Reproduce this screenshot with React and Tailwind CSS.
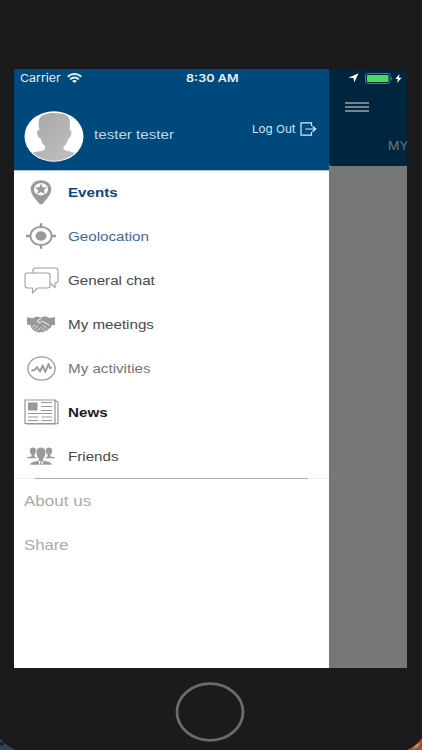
import React from "react";

const LABEL = "origin-left scale-x-[1.14] whitespace-nowrap text-[13.3px] leading-[20px]";

function Wifi() {
  return (
    <svg className="h-[10px] w-[15px]" viewBox="0 0 15 10" fill="none" stroke="#e6f0fa" strokeWidth="2">
      <path d="M0.7 3.8C4.5 0.2 10.5 0.2 14.3 3.8" />
      <path d="M3.1 6.4C5.6 4 9.4 4 11.9 6.4" />
      <path d="M5 7.9C6.4 6.6 8.6 6.6 10 7.9L7.5 10Z" fill="#e6f0fa" stroke="none" />
    </svg>
  );
}

function Avatar() {
  return (
    <svg className="h-[51px] w-[60px]" viewBox="0 0 60 51">
      <defs>
        <clipPath id="face"><ellipse cx="30" cy="25.5" rx="28.6" ry="24.3" /></clipPath>
        <linearGradient id="shade" x1="0" y1="0" x2="1" y2="1">
          <stop offset="0" stopColor="#a6a6a6" />
          <stop offset="1" stopColor="#c2c2c2" />
        </linearGradient>
      </defs>
      <ellipse cx="30" cy="25.5" rx="29.5" ry="25.3" fill="#fff" />
      <path clipPath="url(#face)" fill="url(#shade)" d="M15.500 19C13.500 10 15 4.500 21 3.500C26 1.500 32 2 37 2.500C43 3 46.500 7 46 13L45.500 19C48.500 18 48 26 44.500 27.500C43.500 31 42 34 39.500 36L39.500 38C43 41 49 40 53 43L53 52H7L8 42C14 39.500 19 41 21 38L21 35C18.500 33 17.500 31 16.500 27.500C12.500 26 12 18 15.500 19Z" />
    </svg>
  );
}

function LogoutIcon() {
  return (
    <svg className="h-[14px] w-[17px]" viewBox="0 0 17 14" fill="none" stroke="#dbeaf7" strokeWidth="1.2">
      <path d="M11.500 4V0.800H1V13.200H11.500V10M5.500 7H15.500M12.500 4.200L15.700 7L12.500 9.800" />
    </svg>
  );
}

function EventsIcon() {
  return (
    <svg className="h-[25px] w-[22px]" viewBox="0 0 22 25">
      <path fill="#999" d="M11 0.300C5 0.300 0.700 4.200 0.700 9.200C0.700 14.700 5.500 18.500 9 23.500Q11 25.500 13 23.500C16.500 18.500 21.300 14.700 21.300 9.200C21.300 4.200 17 0.300 11 0.300Z" />
      <ellipse cx="11" cy="9.200" rx="7" ry="6.200" fill="#fff" />
      <path fill="#999" d="M11 3.500L12.700 7.200L17.200 7.500L13.800 10.100L14.900 14L11 11.900L7.100 14L8.200 10.100L4.800 7.500L9.300 7.200Z" />
    </svg>
  );
}

function GeoIcon() {
  return (
    <svg className="h-[26px] w-[30px]" viewBox="0 0 30 26">
      <ellipse cx="15" cy="13" rx="10.600" ry="9.200" fill="none" stroke="#999" strokeWidth="1.800" />
      <ellipse cx="15" cy="13" rx="5.500" ry="4.700" fill="#999" />
      <path stroke="#999" strokeWidth="2.400" d="M15 0.300V5M15 21V25.700M0 13H5M25 13H30" />
    </svg>
  );
}

function ChatIcon() {
  return (
    <svg className="h-[27px] w-[35px]" viewBox="0 0 35 27" fill="#fff" stroke="#a0a0a0" strokeWidth="1.100" strokeLinejoin="round">
      <path d="M11.500 1H31Q34 1 34 3.500V13.500Q34 16 31.500 16H31V20.500L26 16H11.500Q9 16 9 13.500V3.500Q9 1 11.500 1Z" />
      <path d="M3.500 6H23.500Q26 6 26 8.500V18.500Q26 21 23.500 21H13.500L8.500 26V21H3.500Q1 21 1 18.500V8.500Q1 6 3.500 6Z" />
    </svg>
  );
}

function HandshakeIcon() {
  return (
    <svg className="h-[17px] w-[28px]" viewBox="0 0 28 17" strokeLinejoin="round" strokeLinecap="round">
      <path fill="#999" d="M0 1.200L5.500 2.200L9.500 0.500L14 1.500L18.500 0.300L22.500 2L28 1V9L24.500 9.300L24 11.500L21.800 12.800L20.500 14.500L18 14.700L16.300 16.300L13.800 16L11.800 16.800L9 15.500L6 14L4 11.300L3.500 9L0 8.500Z" />
      <path fill="none" stroke="#fff" strokeWidth="0.900" d="M14 2.400L10 5.300Q10.800 7.500 13.500 6.300L15.500 5.300L22 9" />
      <path fill="none" stroke="#fff" strokeWidth="0.700" d="M8.500 8.800L5.500 11M11 10.200L7.500 13M13 12L10.500 14.800M16.500 9.500L19.500 12.300M14.500 11.500L17 14" />
    </svg>
  );
}

function ActivityIcon() {
  return (
    <svg className="h-[25px] w-[29px]" viewBox="0 0 29 25" fill="none" stroke="#999">
      <ellipse cx="14.500" cy="12.500" rx="13.600" ry="11.600" strokeWidth="1.300" />
      <path strokeWidth="1.900" strokeLinejoin="round" d="M4.500 14.500L7.500 14L10 11L13 15.500L15.700 9.500L18.300 16L21.500 8L23 12L24.800 11.500" />
    </svg>
  );
}

function NewsIcon() {
  return (
    <svg className="h-[26px] w-[35px]" viewBox="0 0 35 26" fill="none" stroke="#979797">
      <path d="M31 1.500L34 3.200V24.500L31 25H2" strokeWidth="1.200" />
      <path d="M1 1H31V24.500H1Z" fill="#fff" strokeWidth="1.200" />
      <path d="M4 3.500H13.500V11.500H4Z" fill="#999" stroke="none" />
      <path strokeWidth="1.100" d="M17 3.500H28M17 7.500H28M17 11.500H28M4 14.500H28M4 18H14M17.500 18H28M4 21.500H14M17.500 21.500H28" />
    </svg>
  );
}

function FriendsIcon() {
  return (
    <svg className="h-[18px] w-[28px]" viewBox="0 0 28 18" fill="#999">
      <path d="M2.800 3.500C2.800 -0.500 9.200 -0.500 9.200 3.500C9.200 6 8 7 7.300 8V9.200L10 11.300H0C0 9.500 3.300 10 4.700 9.200V8C3.500 6.500 2.800 5.500 2.800 3.500Z" />
      <path d="M25.200 3.500C25.200 -0.500 18.800 -0.500 18.800 3.500C18.800 6 20 7 20.700 8V9.200L18 11.300H28C28 9.500 24.700 10 23.300 9.200V8C24.500 6.500 25.200 5.500 25.200 3.500Z" />
      <path stroke="#fff" strokeWidth="0.600" d="M9.200 4.800C9.200 -1.200 18.800 -1.200 18.800 4.800C18.800 8.500 17.500 10.500 16.300 12V13.300C19 14.500 25 14 25 18H3C3 14 9 14.500 11.700 13.300V12C10.500 10.500 9.200 8.500 9.200 4.800Z" />
      <path fill="#fff" d="M11.300 13.500L12.600 18H15.400L16.700 13.500L14.500 14.500L15 18H13L13.500 14.500Z" />
    </svg>
  );
}

const items = [
  { text: "Events", Icon: EventsIcon, style: "font-bold text-[#0c4780]" },
  { text: "Geolocation", Icon: GeoIcon, style: "text-[#3e6c98]" },
  { text: "General chat", Icon: ChatIcon, style: "text-[#484848]" },
  { text: "My meetings", Icon: HandshakeIcon, style: "text-[#484848]" },
  { text: "My activities", Icon: ActivityIcon, style: "text-[#747474]" },
  { text: "News", Icon: NewsIcon, style: "font-bold text-[#1b1b1b]" },
  { text: "Friends", Icon: FriendsIcon, style: "text-[#484848]" },
];

function Drawer() {
  return (
    <div className="flex w-[315px] shrink-0 flex-col bg-white">
      <header className="h-[102px] border-b border-[#a9c6de] bg-[#00497d]">
        <div className="flex h-[18px] items-center pl-[6px] font-[Inter,sans-serif] text-[11px] text-[#e6f0fa]">
          <span className="w-[47px] origin-left scale-x-[1.13] whitespace-nowrap">Carrier</span>
          <Wifi />
          <span className="ml-[104px] origin-left scale-x-[1.15] whitespace-nowrap font-semibold">8:30 AM</span>
        </div>
        <div className="flex h-[82px] pl-[10px] pt-[24px]">
          <Avatar />
          <span className={LABEL + " ml-[9.5px] mt-[14px] w-[158.5px] text-[#bed6eb]"}>tester tester</span>
          <span className="mt-[10px] w-[48px] origin-left scale-x-[1.06] whitespace-nowrap font-[Inter,sans-serif] text-[11px] leading-[17px] text-[#d6e6f4]">Log Out</span>
          <div className="mt-[11px]"><LogoutIcon /></div>
        </div>
      </header>
      <nav className="flex flex-col">
        {items.map(({ text, Icon, style }) => (
          <div key={text} className="flex h-[44px] items-center first:-mt-px">
            <div className="flex w-[54px] shrink-0 justify-center"><Icon /></div>
            <span className={LABEL + " pt-[2px] " + style}>{text}</span>
          </div>
        ))}
      </nav>
      <div className="flex h-px bg-[#eeeeee]"><div className="ml-[21px] h-px w-[273px] bg-[#aaaaaa]" /></div>
      <div className="flex h-[44px] items-center pl-[10px] pt-[2px]">
        <span className="origin-left scale-x-[1.19] whitespace-nowrap text-[14.3px] text-[#aaaaaa]">About us</span>
      </div>
      <div className="flex h-[44px] items-center pl-[10px] pt-[2px]">
        <span className="origin-left scale-x-[1.17] whitespace-nowrap text-[14.3px] text-[#aaaaaa]">Share</span>
      </div>
    </div>
  );
}

function Backdrop() {
  return (
    <div className="flex min-w-0 flex-1 flex-col overflow-hidden bg-[#777777]">
      <div className="h-[97px] rounded-bl-[3px] bg-[#00253f]">
        <div className="flex h-[18px] items-center pl-[19px]">
          <svg className="h-[10px] w-[11px]" viewBox="0 0 11 10"><path fill="#fff" d="M10.500 0.300L6.300 9.500L5.500 5.100L0.500 4.800Z" /></svg>
          <svg className="ml-[6px] h-[11px] w-[28px]" viewBox="0 0 28 11">
            <rect x="0.500" y="0.500" width="24.500" height="10" rx="2" fill="none" stroke="#60727f" />
            <rect x="2" y="2" width="21.500" height="7" rx="0.800" fill="#4cd964" />
            <path d="M26 3.500Q28 5.500 26 7.500Z" fill="#60727f" />
          </svg>
          <svg className="ml-[2px] h-[9px] w-[7px]" viewBox="0 0 7 9"><path fill="#fff" d="M4.500 0L0.300 5H3L2 9L6.700 3.700H4Z" /></svg>
        </div>
        <div className="ml-[16px] mt-[15px] flex w-[24px] flex-col gap-[2px]">
          <div className="h-[2px] bg-[#77828b]" />
          <div className="h-[2px] bg-[#77828b]" />
          <div className="h-[2px] bg-[#77828b]" />
        </div>
        <div className="mt-[25px] pl-[59px] font-[Inter,sans-serif] text-[11.5px] leading-[18px] text-[#6c7780]">
          <span className="inline-block origin-left scale-x-[1.1]">MY</span>
        </div>
      </div>
    </div>
  );
}

export default function App() {
  return (
    <div className="relative flex h-[750px] w-[422px] flex-col overflow-hidden bg-[#1b1b1b] pt-[69px] font-['Liberation_Sans',Arial,sans-serif]">
      <main className="ml-[14px] flex h-[598.5px] w-[393px] overflow-hidden">
        <Drawer />
        <Backdrop />
      </main>
      <svg className="ml-[175px] mt-[14.5px] h-[60px] w-[70px] shrink-0" viewBox="0 0 70 60">
        <ellipse cx="35" cy="30" rx="33" ry="28.300" fill="none" stroke="#6c6c6c" strokeWidth="2.800" />
      </svg>
      <svg className="absolute bottom-0 left-0 h-[12px] w-[16px]" viewBox="0 0 16 12">
        <path fill="#34435f" d="M0 1Q7 8 15 12H0Z" /><path fill="#172139" d="M0 4L5 5L3 8L0 7Z" />
      </svg>
      <svg className="absolute bottom-0 right-0 h-[12px] w-[16px]" viewBox="0 0 16 12">
        <path fill="#a94f2b" d="M16 0Q10 8 1 12H16Z" /><path fill="#b99477" d="M11 6L14 5L12 9L6 11Z" />
      </svg>
    </div>
  );
}
